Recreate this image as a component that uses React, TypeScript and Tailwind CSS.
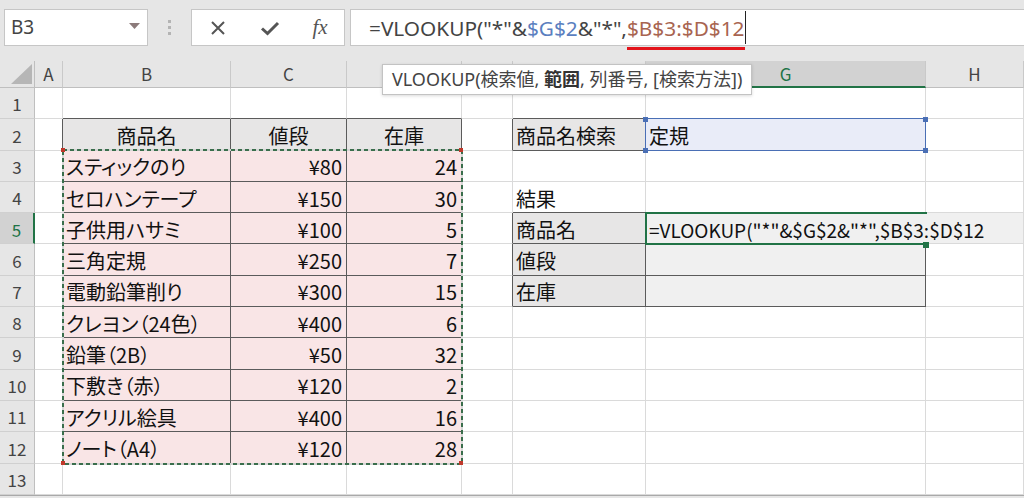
import React from "react";

const products: [string, string, number][] = [
  ["スティックのり", "¥80", 24],
  ["セロハンテープ", "¥150", 30],
  ["子供用ハサミ", "¥100", 5],
  ["三角定規", "¥250", 7],
  ["電動鉛筆削り", "¥300", 15],
  ["クレヨン（24色）", "¥400", 6],
  ["鉛筆（2B）", "¥50", 32],
  ["下敷き（赤）", "¥120", 2],
  ["アクリル絵具", "¥400", 16],
  ["ノート（A4）", "¥120", 28],
];

const LETTERS = ["", "A", "B", "C", "D", "E", "F", "G", "H"];

const inTable = (r: number, c: number) =>
  (r >= 2 && r <= 12 && c >= 2 && c <= 4) ||
  (r === 2 && (c === 6 || c === 7)) ||
  (r >= 5 && r <= 7 && (c === 6 || c === 7));

function rightClass(r: number, c: number) {
  if (r === 5 && c === 7) return "border-r-[#f0f0f0]";
  if (r === 2 && (c === 6 || c === 7)) return "border-r-[#4a6fb5]";
  if (inTable(r, c) || inTable(r, c + 1)) return "border-r-[#5b5b5b]";
  return "border-r-[#dadada]";
}

function bottomClass(r: number, c: number) {
  if (c === 7 && (r === 1 || r === 2)) return "border-b-[#4a6fb5]";
  if (inTable(r, c) || inTable(r + 1, c)) return "border-b-[#5b5b5b]";
  return "border-b-[#dadada]";
}

type CellData = { text?: React.ReactNode; align?: "left" | "center" | "right"; bg?: string };

function cellData(r: number, c: number): CellData {
  if (r === 2) {
    if (c === 2) return { text: "商品名", align: "center", bg: "bg-[#e7e6e6]" };
    if (c === 3) return { text: "値段", align: "center", bg: "bg-[#e7e6e6]" };
    if (c === 4) return { text: "在庫", align: "center", bg: "bg-[#e7e6e6]" };
    if (c === 6) return { text: "商品名検索", bg: "bg-[#e7e6e6]" };
    if (c === 7) return { text: "定規", bg: "bg-[#e9ecf8]" };
  }
  if (r >= 3 && r <= 12 && c >= 2 && c <= 4) {
    const p = products[r - 3];
    if (c === 2) return { text: p[0], bg: "bg-[#f9e5e6]" };
    if (c === 3) return { text: p[1], align: "right", bg: "bg-[#f9e5e6]" };
    return { text: String(p[2]), align: "right", bg: "bg-[#f9e5e6]" };
  }
  if (r === 4 && c === 6) return { text: "結果" };
  if (r >= 5 && r <= 7 && c === 6) {
    return { text: ["商品名", "値段", "在庫"][r - 5], bg: "bg-[#e7e6e6]" };
  }
  if (r === 5 && c === 7) {
    return {
      text: (
        <span className="relative z-10 whitespace-nowrap text-[19px]">=VLOOKUP("*"&amp;$G$2&amp;"*",$B$3:$D$12</span>
      ),
      bg: "bg-[#f0f0f0]",
    };
  }
  if (r === 5 && c === 8) return { bg: "bg-[#f0f0f0]" };
  if ((r === 6 || r === 7) && c === 7) return { bg: "bg-[#f0f0f0]" };
  return {};
}

function Cell({ r, c }: { r: number; c: number }) {
  if (r === 0 && c === 0) {
    return (
      <div className="bg-[#e6e6e6] border-r border-b border-r-[#bfbfbf] border-b-[#bfbfbf] flex items-end justify-end pr-[2px] pb-[3px]">
        <svg width="21" height="20" viewBox="0 0 21 20">
          <polygon points="21,0 21,20 0,20" fill="#b6b6b6" />
        </svg>
      </div>
    );
  }
  if (r === 0) {
    const active = c === 7;
    return (
      <div
        className={
          active
            ? "bg-[#d2d2d2] border-r border-r-[#c9c9c9] border-b-2 border-b-[#217346] flex items-center justify-center text-[17px] text-[#217346]"
            : "bg-[#e6e6e6] border-r border-r-[#c9c9c9] border-b border-b-[#bfbfbf] flex items-center justify-center text-[17px] text-[#444]"
        }
      >
        {LETTERS[c]}
      </div>
    );
  }
  if (c === 0) {
    const active = r === 5;
    return (
      <div
        className={
          active
            ? "bg-[#d2d2d2] border-r-2 border-r-[#217346] border-b border-b-[#d0d0d0] flex items-center justify-center pt-[2px] text-[17px] text-[#217346]"
            : "bg-[#e6e6e6] border-r border-r-[#bfbfbf] border-b border-b-[#d0d0d0] flex items-center justify-center pt-[2px] text-[17px] text-[#444]"
        }
      >
        {r}
      </div>
    );
  }
  const d = cellData(r, c);
  const align =
    d.align === "center" ? "justify-center" : d.align === "right" ? "justify-end pr-[4px]" : "justify-start pl-[3px]";
  return (
    <div
      className={`${d.bg ?? "bg-white"} border-r border-b ${rightClass(r, c)} ${bottomClass(r, c)} flex items-center pt-[3px] ${align} text-[20px] text-[#111] leading-none [font-feature-settings:'palt']`}
    >
      {d.text}
    </div>
  );
}

export default function App() {
  const rows = Array.from({ length: 14 }, (_, r) => r);
  const cols = Array.from({ length: 9 }, (_, c) => c);

  return (
    <div className="w-[1024px] h-[498px] overflow-hidden bg-[#e6e6e6] font-['Noto_Sans_CJK_JP',sans-serif]">
      {/* formula bar */}
      <div className="h-[61px] flex items-start pt-[9px] pl-[4px]">
        <div className="w-[144px] h-[37px] bg-white border border-[#c6c6c6] flex items-center justify-between pl-[6px] pr-[7px]">
          <span className="text-[19px] text-[#444] font-['Noto_Sans',sans-serif]">B3</span>
          <svg width="11" height="6" viewBox="0 0 11 6" className="mb-[4px]">
            <polygon points="0,0 11,0 5.5,6" fill="#8c7b7b" />
          </svg>
        </div>
        <div className="w-[43px] h-[37px] flex flex-col items-center justify-center gap-[3px]">
          <span className="w-[3px] h-[3px] bg-[#b4b4b4]" />
          <span className="w-[3px] h-[3px] bg-[#b4b4b4]" />
          <span className="w-[3px] h-[3px] bg-[#b4b4b4]" />
        </div>
        <div className="w-[154px] h-[37px] bg-white border border-[#c6c6c6] flex items-center">
          <div className="w-[52px] flex justify-center">
            <svg width="16" height="16" viewBox="0 0 16 16">
              <path d="M2 2 L14 14 M14 2 L2 14" stroke="#555" strokeWidth="2" />
            </svg>
          </div>
          <div className="w-[52px] flex justify-center">
            <svg width="20" height="16" viewBox="0 0 20 16">
              <path d="M2 8.5 L7.5 13.5 L18 3" stroke="#555" strokeWidth="3" fill="none" />
            </svg>
          </div>
          <div className="w-[48px] flex justify-center">
            <span className="italic text-[21px] text-[#555] font-['Liberation_Serif',serif] leading-none">fx</span>
          </div>
        </div>
        <div className="ml-[5px] flex-1 h-[37px] bg-white border border-r-0 border-[#c6c6c6] flex items-center pl-[18px] font-['Noto_Sans','Noto_Sans_CJK_JP',sans-serif] text-[20.8px] text-[#444] leading-[24px]">
          <span>=VLOOKUP("*"&amp;</span>
          <span className="text-[#5b7fc0]">$G$2</span>
          <span>&amp;"*",</span>
          <span className="relative text-[#a86450]">
            $B$3:$D$12
            <span className="absolute left-0 right-0 top-[31px] h-[3px] bg-[#e3141b]" />
          </span>
          <span className="inline-block w-px h-[33px] bg-[#222]" />
        </div>
      </div>

      {/* sheet */}
      <div className="relative">
        <div className="grid grid-cols-[35px_28px_168px_116px_115px_51px_133px_280px_1fr] grid-rows-[27px_repeat(13,31.3px)]">
          {rows.map((r) => cols.map((c) => <Cell key={`${r}-${c}`} r={r} c={c} />))}
        </div>
        <div className="h-[4px] border-t border-[#a9a9a9] bg-[#e6e6e6]" />

        {/* copy range marching ants */}
        <svg className="absolute left-[62px] top-[88px] pointer-events-none" width="401" height="316" viewBox="0 0 401 316">
          <rect x="1" y="1" width="399" height="314" fill="none" stroke="#d6d6d6" strokeWidth="2" />
          <rect x="1" y="1" width="399" height="314" fill="none" stroke="#3a6e4c" strokeWidth="2" strokeDasharray="4 3" />
        </svg>
        <span className="absolute left-[61px] top-[87px] w-[4px] h-[4px] bg-[#c0392b]" />
        <span className="absolute left-[459px] top-[87px] w-[4px] h-[4px] bg-[#c0392b]" />
        <span className="absolute left-[61px] top-[400px] w-[4px] h-[4px] bg-[#c0392b]" />
        <span className="absolute left-[459px] top-[400px] w-[4px] h-[4px] bg-[#c0392b]" />

        {/* reference highlight on G2 */}
        <span className="absolute left-[643px] top-[56px] w-[5px] h-[5px] bg-[#4a6fb5]" />
        <span className="absolute left-[923px] top-[56px] w-[5px] h-[5px] bg-[#4a6fb5]" />
        <span className="absolute left-[643px] top-[87px] w-[5px] h-[5px] bg-[#4a6fb5]" />
        <span className="absolute left-[923px] top-[87px] w-[5px] h-[5px] bg-[#4a6fb5]" />

        {/* active cell G5 */}
        <div className="absolute left-[645px] top-[151px] w-[282px] h-[33px] border-t-2 border-l-2 border-b-2 border-[#217346] pointer-events-none" />
        <span className="absolute left-[923px] top-[181px] w-[6px] h-[6px] bg-[#217346]" />

        {/* function tooltip */}
        <div className="absolute left-[382px] top-[3px] w-[370px] h-[31px] bg-white border border-[#c3c3c3] shadow-[0_1px_3px_rgba(0,0,0,0.15)] flex items-center pl-[9px] text-[18px] text-[#444] font-['Noto_Sans','Noto_Sans_CJK_JP',sans-serif] whitespace-nowrap">
          <span>
            VLOOKUP(検索値, <b className="font-bold text-[#333]">範囲</b>, 列番号, [検索方法])
          </span>
        </div>
      </div>
    </div>
  );
}
